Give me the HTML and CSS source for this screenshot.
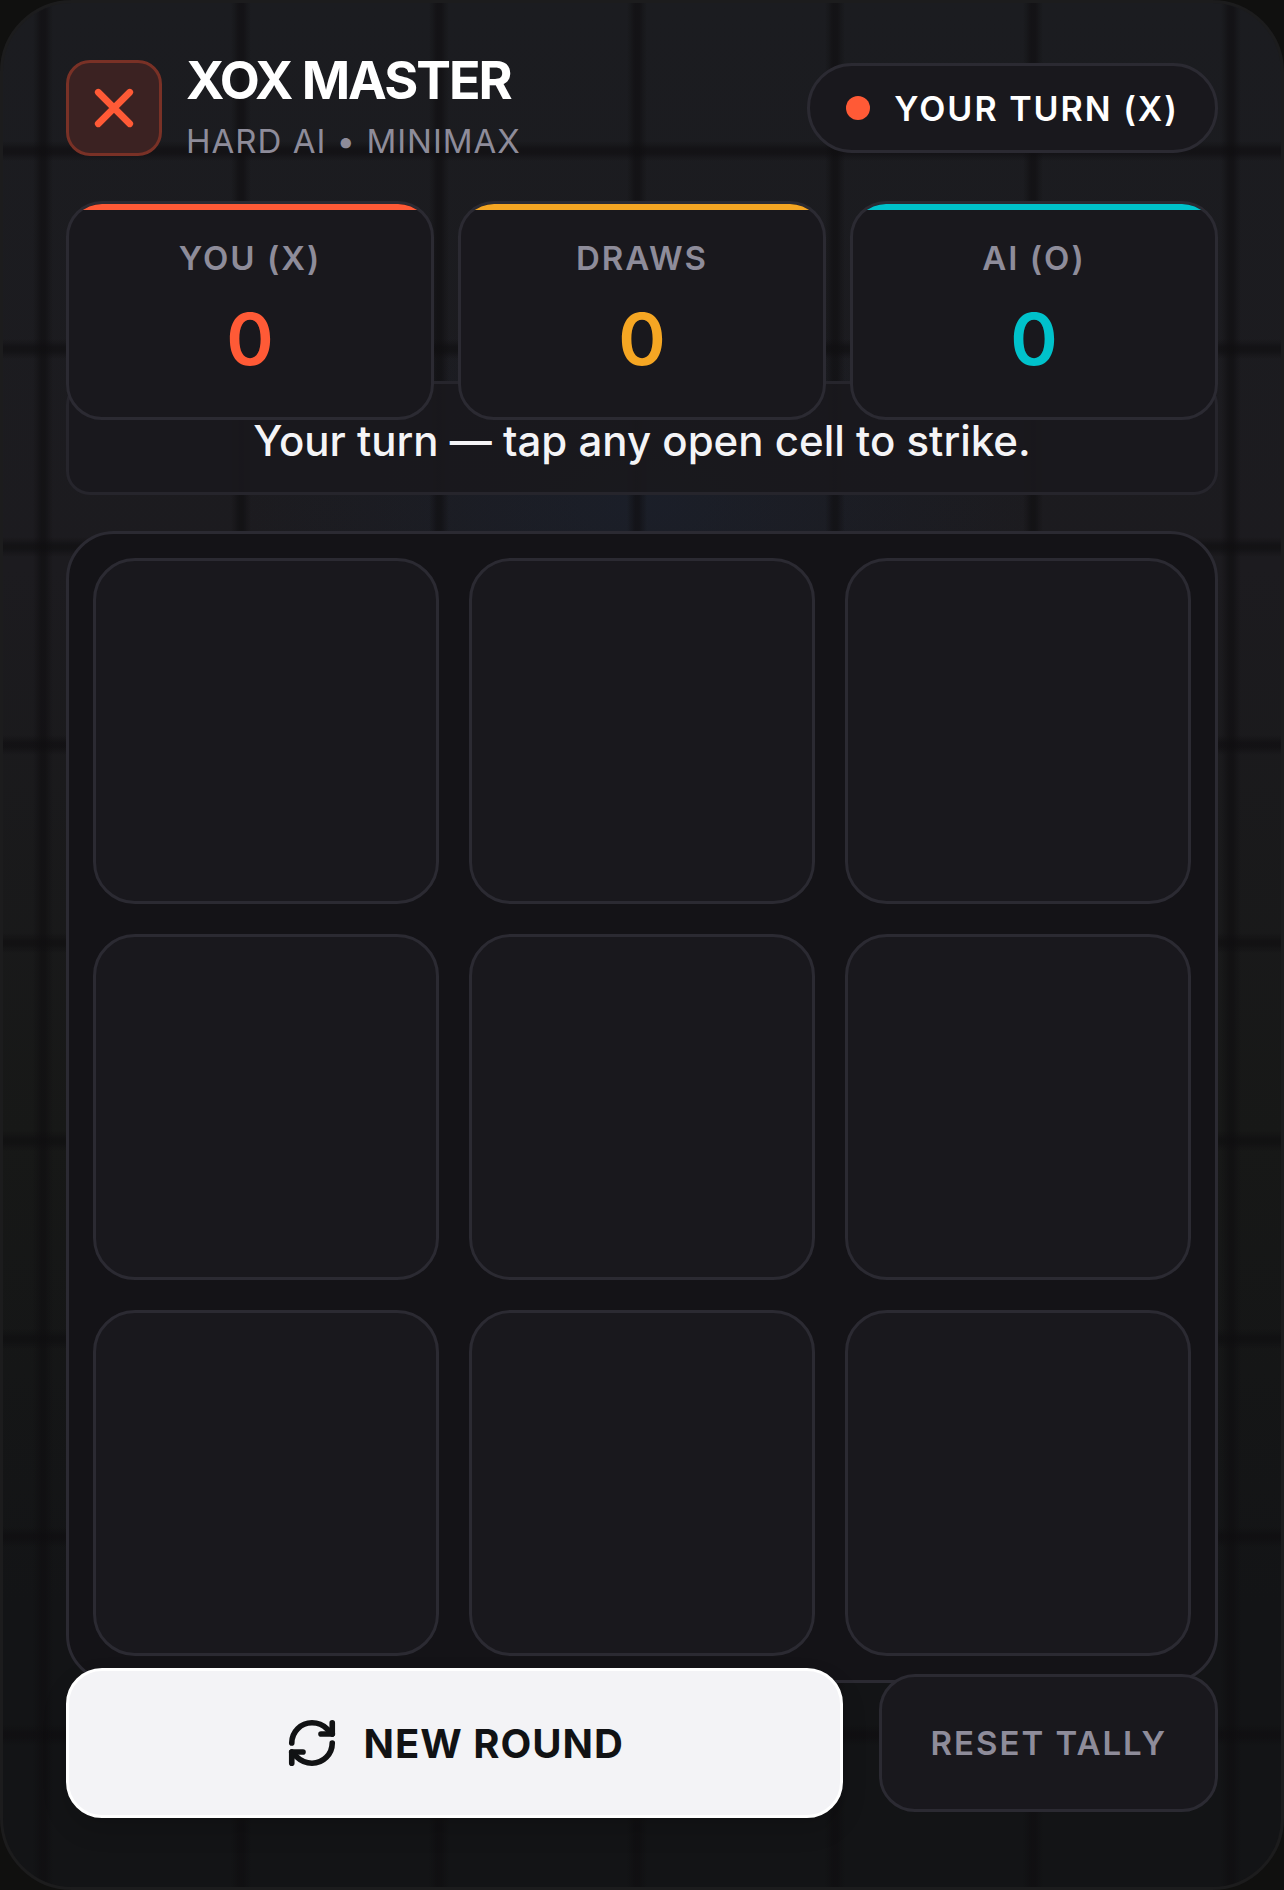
FILE: index.html
```html
<!DOCTYPE html>
<html lang="en">
<head>
    <meta charset="UTF-8">
    <meta name="viewport" content="width=device-width, initial-scale=1.0">
    <title>XOX Master</title>
    <link rel="stylesheet" href="styles.css">
</head>
<body>
    <main class="app">
        <header class="header">
            <div class="brand">
                <div class="logo">
                    <svg viewBox="0 0 24 24" aria-hidden="true">
                        <path d="M5 5l14 14M19 5L5 19"/>
                    </svg>
                </div>
                <div>
                    <h1>XOX MASTER</h1>
                    <p class="subtitle">HARD AI • MINIMAX</p>
                </div>
            </div>
            <div class="turn">
                <span class="dot"></span>
                <span id="turnText">YOUR TURN (X)</span>
            </div>
        </header>

        <section class="scores">
            <div class="score you">
                <span class="label">YOU (X)</span>
                <span class="value" id="scoreX">0</span>
            </div>
            <div class="score draws">
                <span class="label">DRAWS</span>
                <span class="value" id="scoreDraw">0</span>
            </div>
            <div class="score ai">
                <span class="label">AI (O)</span>
                <span class="value" id="scoreO">0</span>
            </div>
        </section>

        <p class="message" id="message">Your turn — tap any open cell to strike.</p>

        <section class="board" id="board">
            <button class="cell" type="button" aria-label="Cell 1"></button>
            <button class="cell" type="button" aria-label="Cell 2"></button>
            <button class="cell" type="button" aria-label="Cell 3"></button>
            <button class="cell" type="button" aria-label="Cell 4"></button>
            <button class="cell" type="button" aria-label="Cell 5"></button>
            <button class="cell" type="button" aria-label="Cell 6"></button>
            <button class="cell" type="button" aria-label="Cell 7"></button>
            <button class="cell" type="button" aria-label="Cell 8"></button>
            <button class="cell" type="button" aria-label="Cell 9"></button>
        </section>

        <footer class="actions">
            <button class="btn primary" type="button" id="newRound">
                <svg viewBox="0 0 24 24" aria-hidden="true">
                    <path d="M3 12a9 9 0 0 1 9-9 9.75 9.75 0 0 1 6.74 2.74L21 8"/>
                    <path d="M21 3v5h-5"/>
                    <path d="M21 12a9 9 0 0 1-9 9 9.75 9.75 0 0 1-6.74-2.74L3 16"/>
                    <path d="M8 16H3v5"/>
                </svg>
                NEW ROUND
            </button>
            <button class="btn secondary" type="button" id="resetTally">RESET TALLY</button>
        </footer>
    </main>
</body>
</html>
```

FILE: styles.css
```css
:root {
    --x: #ff5a36;
    --o: #00c2cb;
    --draw: #f5a623;
    --surface: #19181d;
    --line: #2b2a32;
    --muted: #8e8c9a;
}
* {
    box-sizing: border-box;
    margin: 0;
    padding: 0;
}
body {
    background: #10100f;
    color: #f4f4f6;
    font-family: Inter, "Liberation Sans", sans-serif;
}
button {
    font-family: inherit;
    cursor: pointer;
}

.app {
    position: relative;
    min-height: 100vh;
    padding: 57px 63px 69px;
    border: 3px solid #1c1c1d;
    border-radius: 72px;
    overflow: hidden;
    background:
        radial-gradient(ellipse 400px 200px at 50% 500px, rgba(26, 34, 50, 0.5), transparent),
        linear-gradient(#1b1c20, #1c1b1f 30%, #171817 60%, #131416 85%);
}
/* soft dark grid behind everything */
.app::before {
    content: "";
    position: absolute;
    inset: 0;
    background:
        linear-gradient(90deg, transparent, rgba(14, 13, 15, 0.6) 8px 12px, transparent 20px) 30px 0 / 198px 198px,
        linear-gradient(transparent, rgba(14, 13, 15, 0.6) 8px 12px, transparent 20px) 0 138px / 198px 198px;
}

.header {
    position: relative;
    display: flex;
    justify-content: space-between;
    align-items: center;
    height: 96px;
    margin-bottom: 45px;
}
.brand {
    display: flex;
    align-items: center;
    gap: 24px;
}
.logo {
    width: 96px;
    height: 96px;
    display: flex;
    align-items: center;
    justify-content: center;
    background: #3b2222;
    border: 3px solid #793126;
    border-radius: 24px;
}
.logo svg {
    width: 54px;
    height: 54px;
    fill: none;
    stroke: var(--x);
    stroke-width: 3;
    stroke-linecap: round;
}
h1 {
    font-size: 52px;
    line-height: 48px;
    font-weight: 700;
    letter-spacing: -2px;
    color: #fff;
}
.subtitle {
    margin-top: 18px;
    font-size: 33px;
    line-height: 36px;
    letter-spacing: 1px;
    color: var(--muted);
}
.turn {
    display: flex;
    align-items: center;
    gap: 24px;
    height: 90px;
    padding: 0 36px;
    background: var(--surface);
    border: 3px solid var(--line);
    border-radius: 45px;
    font-size: 34px;
    font-weight: 600;
    letter-spacing: 2px;
    color: #fff;
}
.dot {
    width: 24px;
    height: 24px;
    border-radius: 50%;
    background: var(--x);
}

.scores {
    position: relative;
    z-index: 2;
    display: grid;
    grid-template-columns: repeat(3, 1fr);
    gap: 24px;
}
.score {
    display: flex;
    flex-direction: column;
    align-items: center;
    padding-bottom: 33px;
    background: var(--surface);
    border: 3px solid var(--line);
    border-radius: 36px;
    overflow: hidden;
}
.score::before {
    content: "";
    width: 100%;
    height: 6px;
    margin-bottom: 27px;
    background: currentColor;
}
.label {
    font-size: 33px;
    line-height: 42px;
    font-weight: 600;
    letter-spacing: 2px;
    color: var(--muted);
}
.value {
    margin-top: 15px;
    font-size: 72px;
    line-height: 90px;
    font-weight: 600;
}
.you {
    color: var(--x);
}
.draws {
    color: var(--draw);
}
.ai {
    color: var(--o);
}

.message {
    position: relative;
    z-index: 1;
    margin: -39px 0 36px;
    padding: 33px 24px 27px;
    background: rgba(25, 24, 29, 0.9);
    border: 3px solid #26252c;
    border-radius: 24px;
    font-size: 42px;
    line-height: 48px;
    font-weight: 500;
    text-align: center;
}

.board {
    position: relative;
    display: grid;
    grid-template-columns: repeat(3, 1fr);
    grid-template-rows: repeat(3, 1fr);
    gap: 30px;
    aspect-ratio: 1;
    padding: 24px;
    background: #141317;
    border: 3px solid var(--line);
    border-radius: 48px;
}
.cell {
    background: var(--surface);
    border: 3px solid var(--line);
    border-radius: 42px;
}

.actions {
    position: relative;
    display: flex;
    align-items: center;
    gap: 36px;
    margin-top: -15px;
}
.btn {
    border-radius: 36px;
}
.primary {
    flex: 1;
    display: flex;
    align-items: center;
    justify-content: center;
    gap: 24px;
    height: 150px;
    background: #f3f3f6;
    border: 3px solid #fff;
    box-shadow: 0 12px 24px rgba(0, 0, 0, 0.15);
    color: #111214;
    font-size: 40px;
    font-weight: 700;
    letter-spacing: 1px;
}
.primary svg {
    width: 54px;
    height: 54px;
    fill: none;
    stroke: currentColor;
    stroke-width: 2.5;
    stroke-linecap: round;
    stroke-linejoin: round;
}
.secondary {
    height: 138px;
    padding: 0 48px;
    background: var(--surface);
    border: 3px solid var(--line);
    color: var(--muted);
    font-size: 33px;
    font-weight: 600;
    letter-spacing: 2px;
}
```
